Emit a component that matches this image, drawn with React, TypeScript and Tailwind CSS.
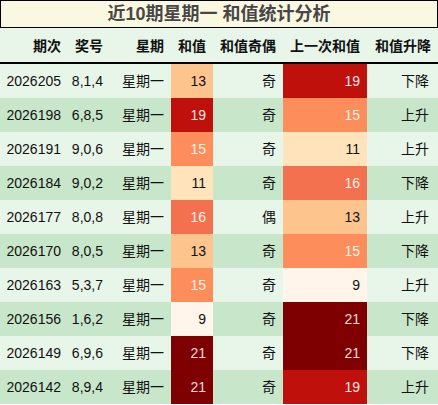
const ROWS = [
  { issue: "2026205", nums: "8,1,4", sum: 13, parity: "奇", prev: 19, trend: "下降" },
  { issue: "2026198", nums: "6,8,5", sum: 19, parity: "奇", prev: 15, trend: "上升" },
  { issue: "2026191", nums: "9,0,6", sum: 15, parity: "奇", prev: 11, trend: "上升" },
  { issue: "2026184", nums: "9,0,2", sum: 11, parity: "奇", prev: 16, trend: "下降" },
  { issue: "2026177", nums: "8,0,8", sum: 16, parity: "偶", prev: 13, trend: "上升" },
  { issue: "2026170", nums: "8,0,5", sum: 13, parity: "奇", prev: 15, trend: "下降" },
  { issue: "2026163", nums: "5,3,7", sum: 15, parity: "奇", prev: 9, trend: "上升" },
  { issue: "2026156", nums: "1,6,2", sum: 9, parity: "奇", prev: 21, trend: "下降" },
  { issue: "2026149", nums: "6,9,6", sum: 21, parity: "奇", prev: 21, trend: "下降" },
  { issue: "2026142", nums: "8,9,4", sum: 21, parity: "奇", prev: 19, trend: "上升" },
];

// heat colours for sum values
function heat(v: number) {
  switch (v) {
    case 9:
      return "bg-[#fff5eb] text-[#111]";
    case 11:
      return "bg-[#fee3bb] text-[#111]";
    case 13:
      return "bg-[#fdc48e] text-[#111]";
    case 15:
      return "bg-[#fd8d5a] text-[#fff2ea]";
    case 16:
      return "bg-[#f3714e] text-[#fff2ea]";
    case 19:
      return "bg-[#bf100c] text-[#fbe6e6]";
    default:
      return "bg-[#7f0000] text-[#f2dcdc]";
  }
}

const cell = "flex items-center justify-end pr-[7px]";

export default function App() {
  return (
    <div
      className="w-[438px] h-[405px] bg-white text-[14px] text-[#111]"
      style={{ fontFamily: "'Liberation Sans', 'Noto Sans CJK SC', sans-serif" }}
    >
      <div className="h-[28px] border border-black bg-[#fbf8e1] flex items-center justify-center">
        <span className="text-[18px] font-bold text-[#474747] leading-none">
          近10期星期一 和值统计分析
        </span>
      </div>

      <div className="grid grid-cols-[68px_42px_61px_42px_70px_84px_71px] h-[36px] pt-[3px] bg-[#e8f5e9] border-b-2 border-black font-bold">
        <div className={cell}>期次</div>
        <div className={cell}>奖号</div>
        <div className={cell}>星期</div>
        <div className={cell}>和值</div>
        <div className={cell}>和值奇偶</div>
        <div className={cell}>上一次和值</div>
        <div className={cell}>和值升降</div>
      </div>

      {ROWS.map((r, i) => (
        <div
          key={r.issue}
          className={
            "grid grid-cols-[68px_42px_61px_42px_70px_84px_71px] h-[34px] " +
            (i % 2 === 0 ? "bg-[#e8f5e9]" : "bg-[#c8e6c9]")
          }
        >
          <div className={cell}>{r.issue}</div>
          <div className={cell}>{r.nums}</div>
          <div className={cell}>星期一</div>
          <div className={cell + " " + heat(r.sum)}>{r.sum}</div>
          <div className={cell}>{r.parity}</div>
          <div className={cell + " " + heat(r.prev)}>{r.prev}</div>
          <div className={cell + " pr-[9px]"}>{r.trend}</div>
        </div>
      ))}
    </div>
  );
}
